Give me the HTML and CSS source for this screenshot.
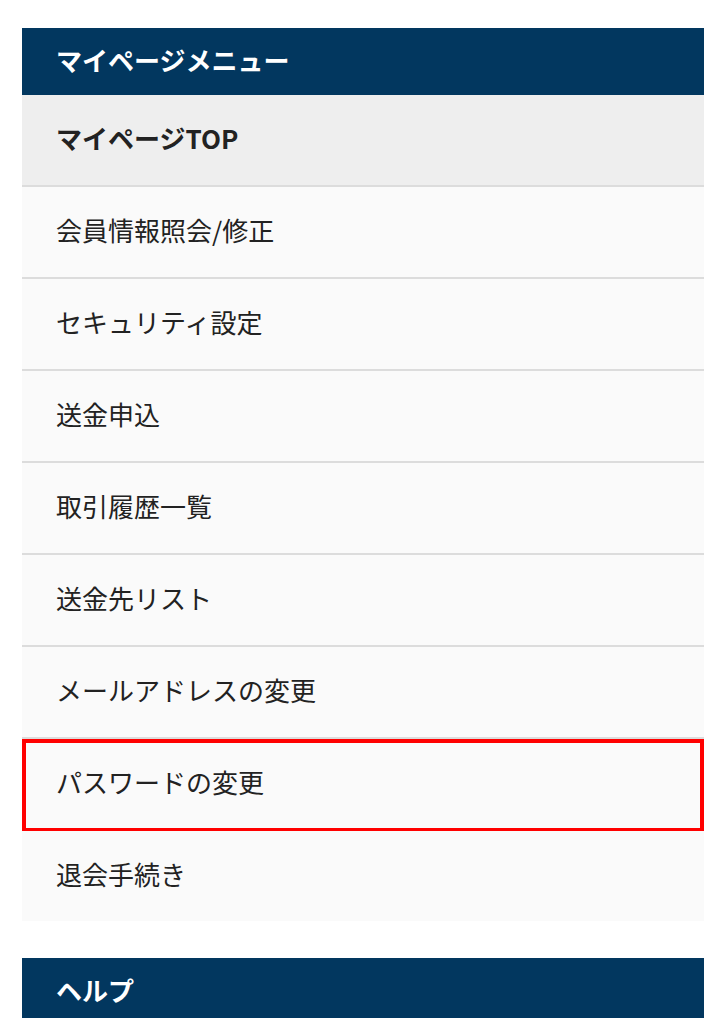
FILE: index.html
```html
<!DOCTYPE html>
<html lang="ja">
<head>
<meta charset="utf-8">
<title>マイページメニュー</title>
<link rel="stylesheet" href="styles.css">
</head>
<body>
<div class="page">
  <section class="panel">
    <h2 class="panel-title">マイページメニュー</h2>
    <ul class="menu">
      <li class="menu-item menu-top"><a href="#">マイページTOP</a></li>
      <li class="menu-item"><a href="#">会員情報照会/修正</a></li>
      <li class="menu-item"><a href="#">セキュリティ設定</a></li>
      <li class="menu-item"><a href="#">送金申込</a></li>
      <li class="menu-item"><a href="#">取引履歴一覧</a></li>
      <li class="menu-item"><a href="#">送金先リスト</a></li>
      <li class="menu-item"><a href="#">メールアドレスの変更</a></li>
      <li class="menu-item is-marked"><a href="#">パスワードの変更</a></li>
      <li class="menu-item menu-last"><a href="#">退会手続き</a></li>
    </ul>
  </section>
  <section class="panel">
    <h2 class="panel-title">ヘルプ</h2>
  </section>
</div>
</body>
</html>
```
FILE: styles.css
```css
html, body {
  margin: 0;
  padding: 0;
  background: #ffffff;
}
body {
  font-family: "Noto Sans CJK JP", "Noto Sans", sans-serif;
  color: #222222;
}
.page {
  padding: 28px 22px 0 22px;
  display: flex;
  flex-direction: column;
  gap: 37px;
}
.panel {
  margin: 0;
}
.panel-title {
  box-sizing: border-box;
  margin: 0;
  height: 67px;
  display: flex;
  align-items: center;
  padding: 0 0 4px 34px;
  background: #02375f;
  color: #ffffff;
  font-size: 26px;
  font-weight: 700;
  letter-spacing: 0;
}
.menu {
  list-style: none;
  margin: 0;
  padding: 0;
}
.menu-item {
  position: relative;
  background: #fafafa;
  border-bottom: 2px solid #dcdcdc;
}
.menu-item a {
  box-sizing: border-box;
  display: flex;
  align-items: center;
  height: 90px;
  padding: 0 0 6px 34px;
  color: #222222;
  text-decoration: none;
  font-size: 26px;
  font-weight: 400;
}
.menu-top {
  background: #eeeeee;
}
.menu-top a {
  font-weight: 700;
}
.menu-last {
  border-bottom: none;
}
.is-marked::after {
  content: "";
  position: absolute;
  left: 0;
  right: 0;
  top: 0;
  bottom: -3px;
  border: 4px solid #ff0000;
  pointer-events: none;
}
```
